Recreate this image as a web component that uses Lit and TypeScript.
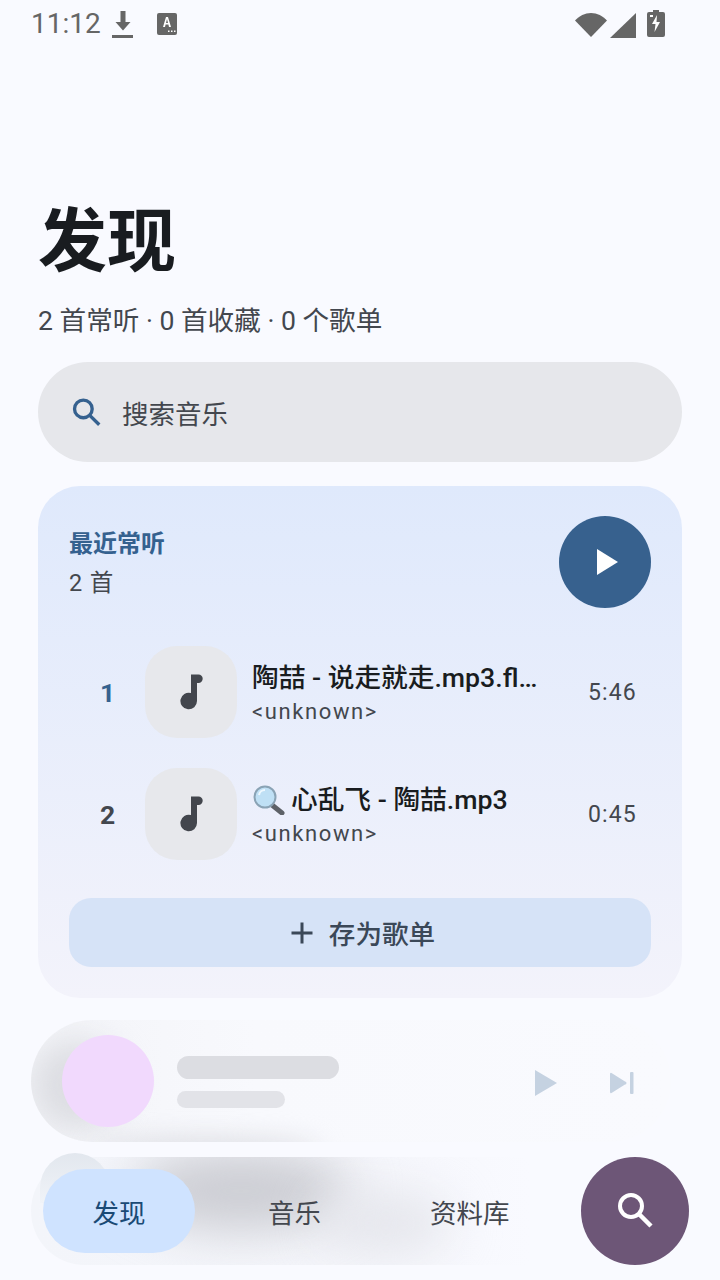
import { LitElement, html, css, svg } from "lit";
import { customElement } from "lit/decorators.js";

const note = svg`<svg class="note" viewBox="0 0 24 36" width="24" height="36"><path d="M12 .5h7.500a4.200 4.200 0 0 1 0 8.400H18V27a8.300 8.300 0 1 1-6-8z" fill="#43464d"/></svg>`;

@customElement("app-root")
export class AppRoot extends LitElement {
  static styles = css`
    :host { display: block; width: 720px; height: 1280px; overflow: hidden; position: relative; background: #f9faff; font-family: Roboto, "Noto Sans CJK SC", sans-serif; color: #191c20; }
    * { box-sizing: border-box; }
    .status { height: 48px; padding: 8px 55px 0 31px; display: flex; align-items: flex-start; color: #666; font-size: 28px; line-height: 32px; }
    .status .time { width: 78px; }
    .status .dl { margin: 2px 0 0 0; }
    .status .a { margin: 4px 0 0 19px; }
    .status .spacer { flex: 1; }
    .status .wifi { margin-top: 3px; }
    .status .sig { margin: 4px 0 0 3px; }
    .status .bat { margin: 1px 0 0 10px; }
    .content { padding: 0 38px; }
    h1 { margin: 153px 0 0 0; font-size: 69px; line-height: 84px; font-weight: 700; letter-spacing: 0; }
    .sub { margin-top: 16px; height: 40px; font-size: 26.6px; line-height: 40px; color: #43474e; white-space: nowrap; }
    .search { margin-top: 21px; height: 100px; border-radius: 50px; background: #e6e7eb; display: flex; align-items: center; padding-left: 33px; gap: 21px; font-size: 26.5px; color: #43474e; }
    .card { margin-top: 24px; height: 512px; border-radius: 42px; padding: 30px 31px 31px; background: linear-gradient(180deg, #dfe9fc 0%, #f3f3fb 100%); display: flex; flex-direction: column; }
    .head { display: flex; justify-content: space-between; height: 92px; }
    .head .t { font-size: 24px; font-weight: 700; line-height: 32px; color: #35618f; margin-top: 12px; }
    .head .c { font-size: 23.5px; line-height: 32px; color: #43474e; margin-top: 7px; letter-spacing: .8px; }
    .play { width: 92px; height: 92px; border-radius: 50%; background: #37618e; display: flex; align-items: center; justify-content: center; padding-left: 4px; }
    .rows { margin-top: 38px; display: flex; flex-direction: column; gap: 30px; }
    .row { height: 92px; display: flex; align-items: center; }
    .num { width: 76px; text-align: center; font-size: 26.5px; font-weight: 700; color: #43474e; padding-left: 1px; }
    .num.on { color: #35618f; }
    .tile { width: 92px; height: 92px; border-radius: 32px; background: #e7e8ec; display: flex; align-items: center; justify-content: center; flex: none; }
    .meta { width: 290px; margin-left: 15px; flex: none; }
    .title { font-size: 26.7px; line-height: 32px; font-weight: 500; white-space: nowrap; display: flex; align-items: center; gap: 6px; color: #191c20; }
    .artist { font-size: 22px; line-height: 28px; color: #43474e; letter-spacing: 1.6px; margin-top: 4px; margin-bottom: -3px; }
    .dur { margin-left: 46px; font-size: 23px; color: #43474e; letter-spacing: 1.1px; }
    .btn { margin-top: 38px; height: 69px; border-radius: 22px; background: #d6e3f7; display: flex; align-items: center; justify-content: center; gap: 15px; font-size: 26.6px; font-weight: 500; color: #3b4858; padding-left: 5px; }
    .player, .nav { position: absolute; left: 31px; overflow: hidden; }
    .player { top: 1020px; width: 640px; height: 122px; border-radius: 61px; background: linear-gradient(90deg, #f3f4f8 0%, #f8f9fd 35%, #f9fafe 100%); }
    .blob { position: absolute; border-radius: 50%; filter: blur(22px); }
    .player .b1 { left: 0; top: 20px; width: 90px; height: 90px; background: #dcdde2; filter: blur(16px); }
    .player .b2 { left: 60px; top: 118px; width: 230px; height: 22px; background: #dcdde2; filter: blur(12px); }
    .cover { position: absolute; left: 31px; top: 15px; width: 92px; height: 92px; border-radius: 50%; background: #f1d9fd; }
    .bar { position: absolute; left: 146px; border-radius: 12px; }
    .bar.a { top: 36px; width: 162px; height: 23px; background: #dcdde2; }
    .bar.b { top: 71px; width: 108px; height: 17px; background: #e2e3e8; }
    .ctl { position: absolute; top: 0; height: 122px; display: flex; align-items: center; }
    .ctl.play1 { left: 503px; padding-top: 4px; }
    .ctl.next { left: 578px; padding-top: 4px; }
    .nav { top: 1157px; width: 500px; height: 108px; border-radius: 54px 0 0 54px; background: linear-gradient(90deg, #f3f5fa 0%, #f5f6fb 60%, #f9faff 100%); }
    .nav .b1 { left: 100px; top: -6px; width: 220px; height: 80px; background: #cccdd3; filter: blur(24px); }
    .nav .b2 { left: 290px; top: 36px; width: 130px; height: 60px; background: #e4e5eb; filter: blur(24px); }
    .navtop { position: absolute; left: 40px; top: 1153px; width: 70px; height: 50px; border-radius: 40px 40px 0 0; background: linear-gradient(180deg, #e2e7ee, #f0f3f8); }
    .items { position: absolute; left: 31px; top: 1157px; width: 520px; height: 108px; font-size: 26.5px; color: #43474e; }
    .pill { position: absolute; left: 12px; top: 12px; width: 152px; height: 84px; border-radius: 42px; background: #cfe3ff; color: #1a4a75; display: flex; align-items: center; justify-content: center; }
    .it { position: absolute; top: 12px; height: 84px; display: flex; align-items: center; }
    .it.music { left: 237px; }
    .it.lib { left: 399px; }
    .fab { position: absolute; left: 581px; top: 1157px; width: 108px; height: 108px; border-radius: 50%; background: #6d5677; display: flex; align-items: center; justify-content: center; }
    .emoji { flex: none; }
  `;

  render() {
    return html`
      <div class="status">
        <span class="time">11:12</span>
        <svg class="dl" width="28" height="30" viewBox="0 0 28 30"><path d="M11.5 1h5v11h5L14 20.5 6.500 12h5z" fill="#666"/><rect x="3" y="25" width="21" height="3" fill="#666"/></svg>
        <svg class="a" width="22" height="24" viewBox="0 0 22 24"><rect x="1" y="1" width="20" height="22" rx="2" fill="#666"/><path d="M7 15 10 5h2l3 10h-2l-.6-2.500H9.600L9 15zM10 11h2l-1-4z" fill="#fff"/><path d="M12 18.500h1.500V20H12zM15 18.500h1.500V20H15zM18 18.500h1.500V20H18z" fill="#fff"/></svg>
        <span class="spacer"></span>
        <svg class="wifi" width="32" height="26" viewBox="0 0 32 26"><path d="M0 9.500C4 5 10 2 16 2s12 3 16 7.500L16 26z" fill="#666"/></svg>
        <svg class="sig" width="27" height="26" viewBox="0 0 27 26"><path d="M26 1v25H0z" fill="#666"/></svg>
        <svg class="bat" width="18" height="28" viewBox="0 0 18 28"><path d="M6 1h6v2h4a2 2 0 0 1 2 2v21a2 2 0 0 1-2 2H2a2 2 0 0 1-2-2V5a2 2 0 0 1 2-2h4z" fill="#666"/><path d="M10 6 5 15h3.500L7.500 23l5.500-10H9.500z" fill="#fff"/><rect x="3" y="6" width="3" height="2" fill="#fff"/></svg>
      </div>
      <div class="content">
        <h1>发现</h1>
        <div class="sub">2 首常听 · 0 首收藏 · 0 个歌单</div>
        <div class="search">
          <svg width="30" height="30" viewBox="0 0 34 34"><circle cx="14" cy="13.500" r="10" fill="none" stroke="#35618f" stroke-width="3.800"/><path d="M21 20.500 32 31.500" stroke="#35618f" stroke-width="3.800"/></svg>
          <span>搜索音乐</span>
        </div>
        <div class="card">
          <div class="head">
            <div><div class="t">最近常听</div><div class="c">2 首</div></div>
            <div class="play"><svg width="24" height="28" viewBox="0 0 24 28"><path d="M2 1v26l21-13z" fill="#fff"/></svg></div>
          </div>
          <div class="rows">
            <div class="row">
              <div class="num on">1</div><div class="tile">${note}</div>
              <div class="meta"><div class="title"><span>陶喆 - 说走就走.mp3.fl…</span></div><div class="artist">&lt;unknown&gt;</div></div>
              <div class="dur">5:46</div>
            </div>
            <div class="row">
              <div class="num">2</div><div class="tile">${note}</div>
              <div class="meta"><div class="title">
                <svg class="emoji" width="33" height="30" viewBox="0 0 33 30"><path d="M20 20 30 28" stroke="#5d6167" stroke-width="5" stroke-linecap="round"/><circle cx="13" cy="12" r="10.500" fill="#bfe0f5" stroke="#8aa3b5" stroke-width="2"/><path d="M7 10a6 6 0 0 1 6-5" stroke="#eef8ff" stroke-width="2" fill="none"/></svg>
                <span>心乱飞 - 陶喆.mp3</span></div><div class="artist">&lt;unknown&gt;</div></div>
              <div class="dur">0:45</div>
            </div>
          </div>
          <div class="btn">
            <svg width="24" height="24" viewBox="0 0 24 24"><path d="M12 1.500v21M1.500 12h21" stroke="#3b4858" stroke-width="3"/></svg>
            <span>存为歌单</span>
          </div>
        </div>
      </div>
      <div class="player">
        <div class="blob b1"></div><div class="blob b2"></div>
        <div class="cover"></div>
        <div class="bar a"></div><div class="bar b"></div>
        <div class="ctl play1"><svg width="24" height="28" viewBox="0 0 24 28"><path d="M1 1v26l22-13z" fill="#c5d2e1"/></svg></div>
        <div class="ctl next"><svg width="26" height="24" viewBox="0 0 26 24"><path d="M1 3a1 1 0 0 1 1.500-1L16 10.500a1.500 1.500 0 0 1 0 3L2.500 22A1 1 0 0 1 1 21z" fill="#c5d2e1"/><rect x="21" y="1" width="3.500" height="22" rx="1" fill="#c5d2e1"/></svg></div>
      </div>
      <div class="nav"><div class="blob b1"></div><div class="blob b2"></div></div>
      <div class="navtop"></div>
      <div class="items">
        <div class="pill">发现</div>
        <div class="it music">音乐</div>
        <div class="it lib">资料库</div>
      </div>
      <div class="fab"><svg width="40" height="40" viewBox="0 0 40 40"><circle cx="16" cy="15" r="11" fill="none" stroke="#fff" stroke-width="4"/><path d="M24 23 36 35" stroke="#fff" stroke-width="4.500"/></svg></div>
    `;
  }
}
